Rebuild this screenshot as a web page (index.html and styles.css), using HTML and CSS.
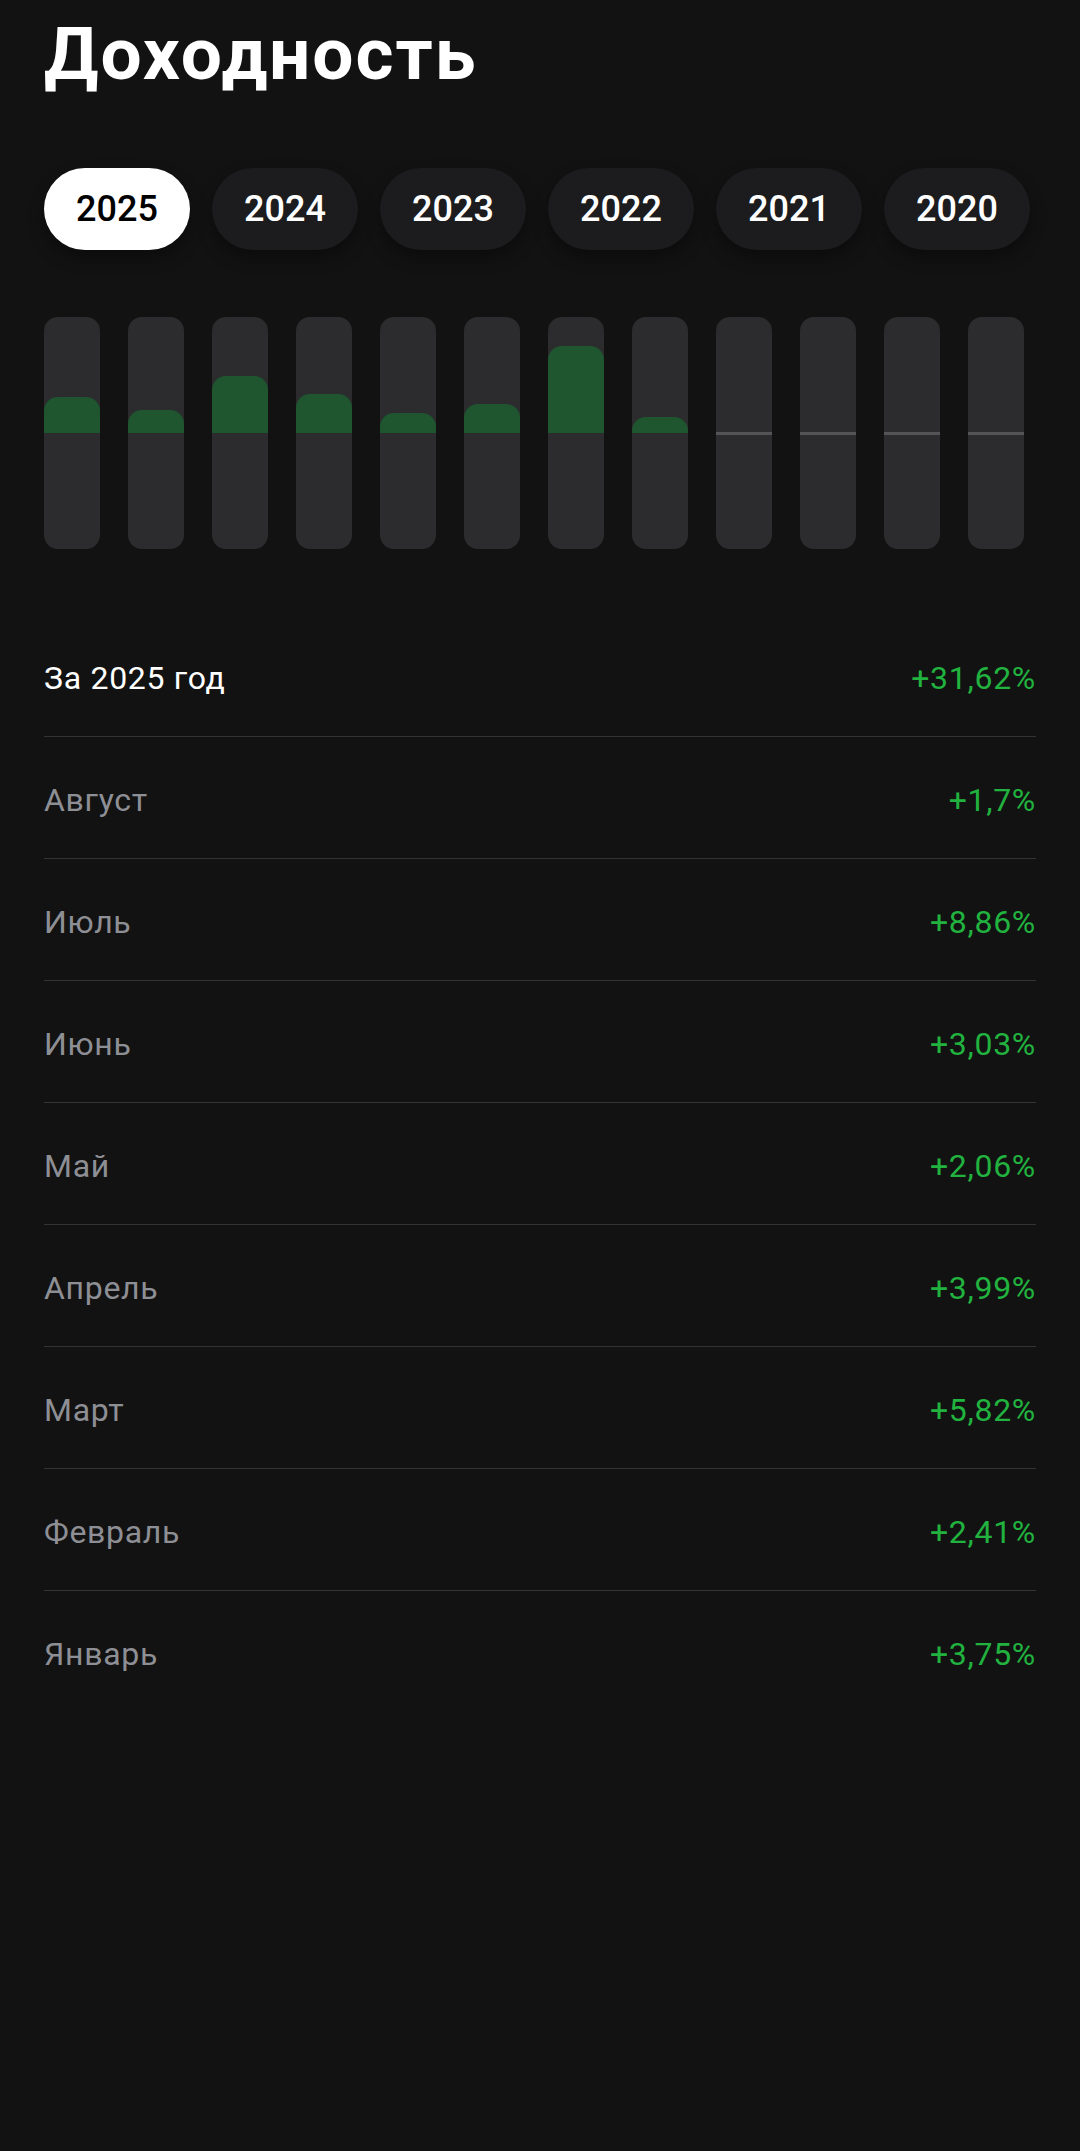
FILE: index.html
```html
<!DOCTYPE html>
<html lang="ru">
<head>
<meta charset="utf-8">
<title>Доходность</title>
<link rel="stylesheet" href="styles.css">
</head>
<body>
<main class="page">
  <h1 class="title">Доходность</h1>

  <div class="years">
    <button class="pill pill-active">2025</button>
    <button class="pill">2024</button>
    <button class="pill">2023</button>
    <button class="pill">2022</button>
    <button class="pill">2021</button>
    <button class="pill">2020</button>
  </div>

  <div class="chart">
    <div class="bar"><div class="up"><div class="fill" style="height:36px"></div></div><div class="down"></div></div>
    <div class="bar"><div class="up"><div class="fill" style="height:23px"></div></div><div class="down"></div></div>
    <div class="bar"><div class="up"><div class="fill" style="height:57px"></div></div><div class="down"></div></div>
    <div class="bar"><div class="up"><div class="fill" style="height:39px"></div></div><div class="down"></div></div>
    <div class="bar"><div class="up"><div class="fill" style="height:20px"></div></div><div class="down"></div></div>
    <div class="bar"><div class="up"><div class="fill" style="height:29px"></div></div><div class="down"></div></div>
    <div class="bar"><div class="up"><div class="fill" style="height:87px"></div></div><div class="down"></div></div>
    <div class="bar"><div class="up"><div class="fill" style="height:16px"></div></div><div class="down"></div></div>
    <div class="bar bar-empty"><div class="up"></div><div class="zero"></div><div class="down"></div></div>
    <div class="bar bar-empty"><div class="up"></div><div class="zero"></div><div class="down"></div></div>
    <div class="bar bar-empty"><div class="up"></div><div class="zero"></div><div class="down"></div></div>
    <div class="bar bar-empty"><div class="up"></div><div class="zero"></div><div class="down"></div></div>
  </div>

  <ul class="list">
    <li class="row row-total"><span class="label">За 2025 год</span><span class="value">+31,62%</span></li>
    <li class="row"><span class="label">Август</span><span class="value">+1,7%</span></li>
    <li class="row"><span class="label">Июль</span><span class="value">+8,86%</span></li>
    <li class="row"><span class="label">Июнь</span><span class="value">+3,03%</span></li>
    <li class="row"><span class="label">Май</span><span class="value">+2,06%</span></li>
    <li class="row"><span class="label">Апрель</span><span class="value">+3,99%</span></li>
    <li class="row"><span class="label">Март</span><span class="value">+5,82%</span></li>
    <li class="row"><span class="label">Февраль</span><span class="value">+2,41%</span></li>
    <li class="row row-last"><span class="label">Январь</span><span class="value">+3,75%</span></li>
  </ul>
</main>
</body>
</html>
```

FILE: styles.css
```css
* {
  box-sizing: border-box;
}

html, body {
  margin: 0;
  padding: 0;
  background: #121212;
}

body {
  font-family: Roboto, "Noto Sans", "Liberation Sans", sans-serif;
  color: #ffffff;
  min-height: 2151px;
}

.page {
  padding: 11px 44px 0 44px;
}

.title {
  margin: 0;
  font-size: 73px;
  line-height: 86px;
  font-weight: 700;
  color: #ffffff;
  letter-spacing: 2px;
}

.years {
  display: flex;
  gap: 22px;
  margin-top: 71px;
}

.pill {
  flex: 0 0 146px;
  height: 82px;
  border: none;
  border-radius: 41px;
  background: #1c1c1e;
  color: #ffffff;
  font-family: Roboto, "Noto Sans", "Liberation Sans", sans-serif;
  font-size: 36px;
  font-weight: 500;
  padding: 0;
  display: flex;
  align-items: center;
  justify-content: center;
  box-shadow: 0 8px 16px rgba(0, 0, 0, 0.35);
}

.pill-active {
  background: #ffffff;
  color: #000000;
}

.chart {
  display: grid;
  grid-template-columns: repeat(12, 56px);
  column-gap: 28px;
  margin-top: 67px;
}

.bar {
  height: 232px;
  background: #2c2c2e;
  border-radius: 14px;
  display: flex;
  flex-direction: column;
  overflow: hidden;
}

.up {
  height: 116px;
  display: flex;
  flex-direction: column;
  justify-content: flex-end;
}

.down {
  flex: 1;
}

.fill {
  background: #1f552f;
  border-radius: 14px 14px 0 0;
}

.bar-empty .up {
  height: 115px;
}

.zero {
  height: 3px;
  background: #545456;
}

.list {
  list-style: none;
  margin: 66px 0 0 0;
  padding: 0;
}

.row {
  height: 122px;
  display: flex;
  align-items: center;
  justify-content: space-between;
  padding-top: 4px;
  border-bottom: 1px solid #333335;
  font-size: 32px;
  line-height: 38px;
  letter-spacing: 0.7px;
}

.row-last {
  border-bottom: none;
}

.label {
  color: #8e8f95;
}

.row-total .label {
  color: #ffffff;
}

.value {
  color: #21b23f;
}
```
